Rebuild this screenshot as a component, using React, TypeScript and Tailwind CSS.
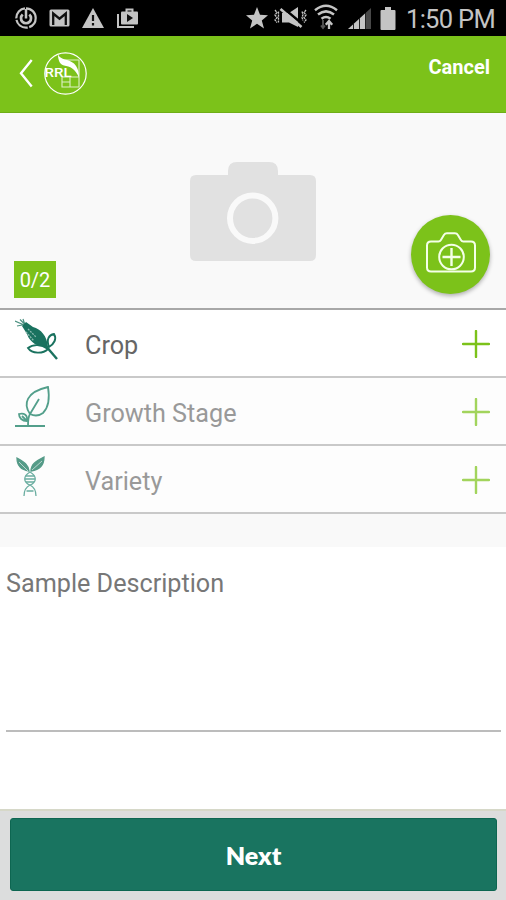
import type { ReactNode } from 'react';

function StatusBar() {
  return (
    <div className="flex h-9 items-center justify-between bg-black pl-[14px] pr-[11px] text-[#c4c4c4]">
      <div className="flex items-center">
        <svg className="h-6 w-6" viewBox="0 0 24 24" fill="none" stroke="currentColor">
          <circle cx="12" cy="12" r="9.7" strokeWidth="2.2" strokeDasharray="27 1.5 15 1.5 14.5 1.4" transform="rotate(-90 12 12)" />
          <path d="M8.7 8.5a5 5 0 1 0 6.6 0" strokeWidth="2.7" />
          <path d="M12 3v9.5" strokeWidth="2.5" />
        </svg>
        <svg className="ml-[11px] h-[18px] w-[21px]" viewBox="0 0 21 18">
          <rect x="0.5" y="0.5" width="20" height="17" rx="1.5" fill="currentColor" />
          <path d="M4.2 16V4.5l6.3 5.2 6.3-5.2V16" fill="none" stroke="#111" strokeWidth="2.3" />
        </svg>
        <svg className="ml-3 h-5 w-[22px]" viewBox="0 0 22 20">
          <path d="M11 0l11 20H0z" fill="currentColor" />
          <path d="M11 7v6M11 15v2.5" stroke="#111" strokeWidth="2.2" />
        </svg>
        <svg className="ml-[13px] h-5 w-[21px]" viewBox="0 0 21 20" fill="none" stroke="currentColor">
          <path d="M1 6v13h16" strokeWidth="2" />
          <path d="M9.5 4V1.5h6V4" strokeWidth="2" />
          <rect x="4" y="3.5" width="17" height="13" rx="1" fill="currentColor" stroke="none" />
          <path d="M10 6v8l6-4z" fill="#111" stroke="none" />
        </svg>
      </div>
      <div className="flex items-center">
        <svg className="h-[22px] w-[22px]" viewBox="0 0 22 22" fill="currentColor">
          <path d="M11 0l3 7.7 8 .5-6.2 5.2L18 21.5l-7-4.7-7 4.7 2.2-8.1L0 8.2l8-.5z" />
        </svg>
        <svg className="ml-[6px] h-[22px] w-[33px]" viewBox="0 0 33 22" fill="none" stroke="currentColor">
          <path d="M8 6h7l9-6v20l-9-4.500H8z" fill="currentColor" stroke="none" />
          <path d="M8 0l21 17.500" stroke="#000" strokeWidth="2.5" />
          <path d="M6.5 2l21 18" strokeWidth="2.6" />
          <path d="M1 3l2 2.5L1 8l2 2.5L1 13l2 2.5M32 3l-2 2.5L32 8l-2 2.5 2 2.5-2 2.5M4.5 4.5v11M28 4.5l1 3-1 3 1 3" strokeWidth="1.3" strokeDasharray="2.3 .7" />
        </svg>
        <svg className="mb-[2px] ml-[7px] h-[26px] w-6" viewBox="0 0 24 26" fill="none" stroke="currentColor">
          <path d="M1 6.2q11-8.8 22 0M4 10.6q8-6.4 16 0M7.5 14.7q4.5-3.5 9 0" strokeWidth="2.5" />
          <path d="M15 25v-8m-3.2 3.7L15 17l3.2 3.7" strokeWidth="2.3" />
          <path d="M9 16v8m-2-2.5L9 24l2-2.5" stroke="#555" strokeWidth="1.8" />
        </svg>
        <svg className="ml-[10px] h-[22px] w-6" viewBox="0 0 24 22">
          <path d="M0 22L17 6.5V22z" fill="currentColor" />
          <path d="M18 5.5L23 1v21h-5z" fill="#484848" />
          <path d="M5.5 17v5M11.5 11v11M17.5 6v16" stroke="#222" strokeWidth="1" />
        </svg>
        <svg className="ml-2 h-[23px] w-4" viewBox="0 0 16 23" fill="currentColor">
          <path d="M5 0h6v3h3.5q1 0 1 1v18q0 1-1 1h-13q-1 0-1-1V4q0-1 1-1H5z" />
        </svg>
        <span className="ml-[10px] mt-[3px] w-[89px] whitespace-nowrap text-[25.5px] leading-none tracking-[-0.7px]">1:50 PM</span>
      </div>
    </div>
  );
}

function Header() {
  return (
    <header className="flex h-[77px] items-start border-b border-[#6eae16] bg-[#7cc21a] text-white">
      <svg className="ml-[19px] mt-[23px] h-[29px] w-[14px]" viewBox="0 0 14 29" fill="none" stroke="currentColor" strokeWidth="2.4">
        <path d="M12.7 1L2 14.3 12.7 27.5" />
      </svg>
      <svg className="ml-[11px] mt-4 h-11 w-[44px]" viewBox="0 0 44 44" fill="none" stroke="currentColor">
        <circle cx="21.5" cy="21.5" r="20.7" strokeWidth="1.2" />
        <path d="M16 8h19v27H18V25h17M26 25v10M18 30h8" strokeWidth="1.1" opacity=".75" />
        <path d="M14 2.5c3 6 10 4 16 9 3 3 5 7 5 14-4-9-9-11-15-12-4-1-6-5-6-11z" fill="currentColor" stroke="none" />
        <text x="0.5" y="24.7" fill="currentColor" stroke="none" fontSize="13" fontWeight="500" textLength="27" lengthAdjust="spacingAndGlyphs">RRL</text>
      </svg>
      <button className="ml-auto mr-4 mt-[19px] text-[20px] font-bold leading-6">Cancel</button>
    </header>
  );
}

function PhotoArea() {
  return (
    <section className="flex h-[195px] bg-[#f9f9f9]">
      <div className="ml-[14px] mt-[148px] flex h-[37px] w-[42px] items-center justify-center bg-[#7cc21a] text-[20px] text-white">
        0/2
      </div>
      <svg className="ml-[134px] mt-[49px] h-[99px] w-[126px]" viewBox="0 0 126 99">
        <path d="M6 13h32V9q0-9 9-9h32q9 0 9 9v4h32q6 0 6 6v74q0 6-6 6H6q-6 0-6-6V19q0-6 6-6z" fill="#e1e1e1" />
        <circle cx="62.7" cy="56.2" r="22.7" fill="none" stroke="#f9f9f9" strokeWidth="6" />
      </svg>
      <button className="ml-auto mr-4 mt-[102px] flex h-[79px] w-[79px] items-center justify-center rounded-full bg-[#7cc21a] shadow-[0_2px_4px_rgba(0,0,0,0.3)]">
        <svg className="-mt-[3px] h-[42px] w-[50px]" viewBox="0 0 50 42" fill="none" stroke="#f4ffe8" strokeWidth="2">
          <path d="M5 9.5h7.5q1.5 0 2.4-1.5l3-5q1.1-1.8 3-1.8h8q2 0 3 1.8l3 5q.9 1.5 2.4 1.5H45q4 0 4 4v22q0 4-4 4H5q-4 0-4-4v-22q0-4 4-4z" />
          <circle cx="25.5" cy="25" r="12.3" />
          <path d="M25.5 16v18M16.5 25h18" strokeWidth="2.4" />
        </svg>
      </button>
    </section>
  );
}

function CornIcon() {
  return (
    <svg className="h-[44px] w-[44px]" viewBox="0 0 44 44" fill="none" stroke="#1a725f" strokeWidth="1.9">
      <path d="M0 3l8 3.5M5 1.5l5 5M2 8l8-1.5M8 1l2 6" stroke="#4b9080" strokeWidth="1.2" />
      <path d="M7 8l4-4 7 5c8 2 14 9 15 20-10 0-18-4-21-13z" fill="#1a725f" stroke="none" />
      <path d="M13 11l8 8M11 14l8 9" stroke="#8dbab0" strokeWidth="1.3" strokeDasharray="2 1" />
      <path d="M33 31c-7-5-15-5-20-1 4 6 15 6 20 1zM34 29c-3-8 0-12 5-13 3 5 0 10-5 13z" fill="#fff" />
      <path d="M30 27l12 14" strokeWidth="2.4" />
    </svg>
  );
}

function SproutIcon() {
  return (
    <svg className="h-[44px] w-[44px]" viewBox="0 0 44 44" fill="none" stroke="#539f8b" strokeWidth="1.8">
      <path d="M15 29C8 19 11 7 33 2c2 12 1 20-5 26-4 3-9 3-13 1" />
      <path d="M24 14L15 29q-2 3-2 12" />
      <path d="M12 36c-5 0-8-3-8-7 5-1.5 9 1 8 7zM7 31l5 5" />
      <path d="M0 41h30" strokeWidth="2" />
    </svg>
  );
}

function DnaIcon() {
  return (
    <svg className="h-[44px] w-[44px]" viewBox="0 0 44 44" fill="none" stroke="#6aada0" strokeWidth="1.3">
      <path d="M14 18C7 17 2 14 2 5c7 4 11 6 12 13zM16 18c0-7 5-10 13-14 0 9-5 13-13 14z" fill="#559b88" stroke="#559b88" />
      <path d="M4 9l9 9M27 8L17 17" stroke="#c5ded7" strokeWidth="0.9" />
      <path d="M15 19c-7 4-7 10 0 13 4 2 6 5 6 11M15 19c7 4 7 10 0 13-4 2-6 5-6 11" />
      <path d="M10.500 23h9M10 26h10M11 29h8M11.500 38h7" />
    </svg>
  );
}

function FieldRow({ icon, label, muted }: { icon: ReactNode; label: string; muted?: boolean }) {
  return (
    <div className={`flex h-[68px] items-center border-b-2 border-[#c9c9c9] ${muted ? 'bg-[#fdfdfd] text-[#999]' : 'bg-white text-[#666]'}`}>
      <div className={`ml-[15px] w-[70px] ${muted ? '-mt-[9px]' : '-mt-[6px]'}`}>{icon}</div>
      <span className="mt-[5px] text-[25.2px] leading-8">{label}</span>
      <svg className="ml-auto mr-4 mt-[2px] h-7 w-7" viewBox="0 0 28 28" stroke={muted ? '#a2d45c' : '#7cc21a'} strokeWidth="2.4" strokeLinecap="round">
        <path d="M14 1v26M1 14h26" />
      </svg>
    </div>
  );
}

export default function App() {
  return (
    <div className="flex h-[900px] w-[506px] flex-col overflow-hidden bg-white font-['Roboto',sans-serif]">
      <StatusBar />
      <Header />
      <PhotoArea />
      <div className="border-t-2 border-[#a8a8a8]">
        <FieldRow icon={<CornIcon />} label="Crop" />
        <FieldRow icon={<SproutIcon />} label="Growth Stage" muted />
        <FieldRow icon={<DnaIcon />} label="Variety" muted />
      </div>
      <div className="h-[33px] bg-[#f9f9f9]" />
      <div className="ml-[6px] mr-[5px] h-[185px] border-b-2 border-[#bcbcbc] pt-[21px] text-[25.2px] leading-8 text-[#777]">
        Sample Description
      </div>
      <footer className="mt-auto flex h-[91px] border-t-2 border-[#d6d8c8] bg-[#dcdddd] pb-[9px] pl-[10px] pr-[9px] pt-[7px]">
        <button className="flex-1 rounded-[3px] border border-[#0d6651] bg-[#197460] pt-[2px] font-['Lato',sans-serif] text-[25px] font-extrabold leading-none text-white">
          Next
        </button>
      </footer>
    </div>
  );
}
